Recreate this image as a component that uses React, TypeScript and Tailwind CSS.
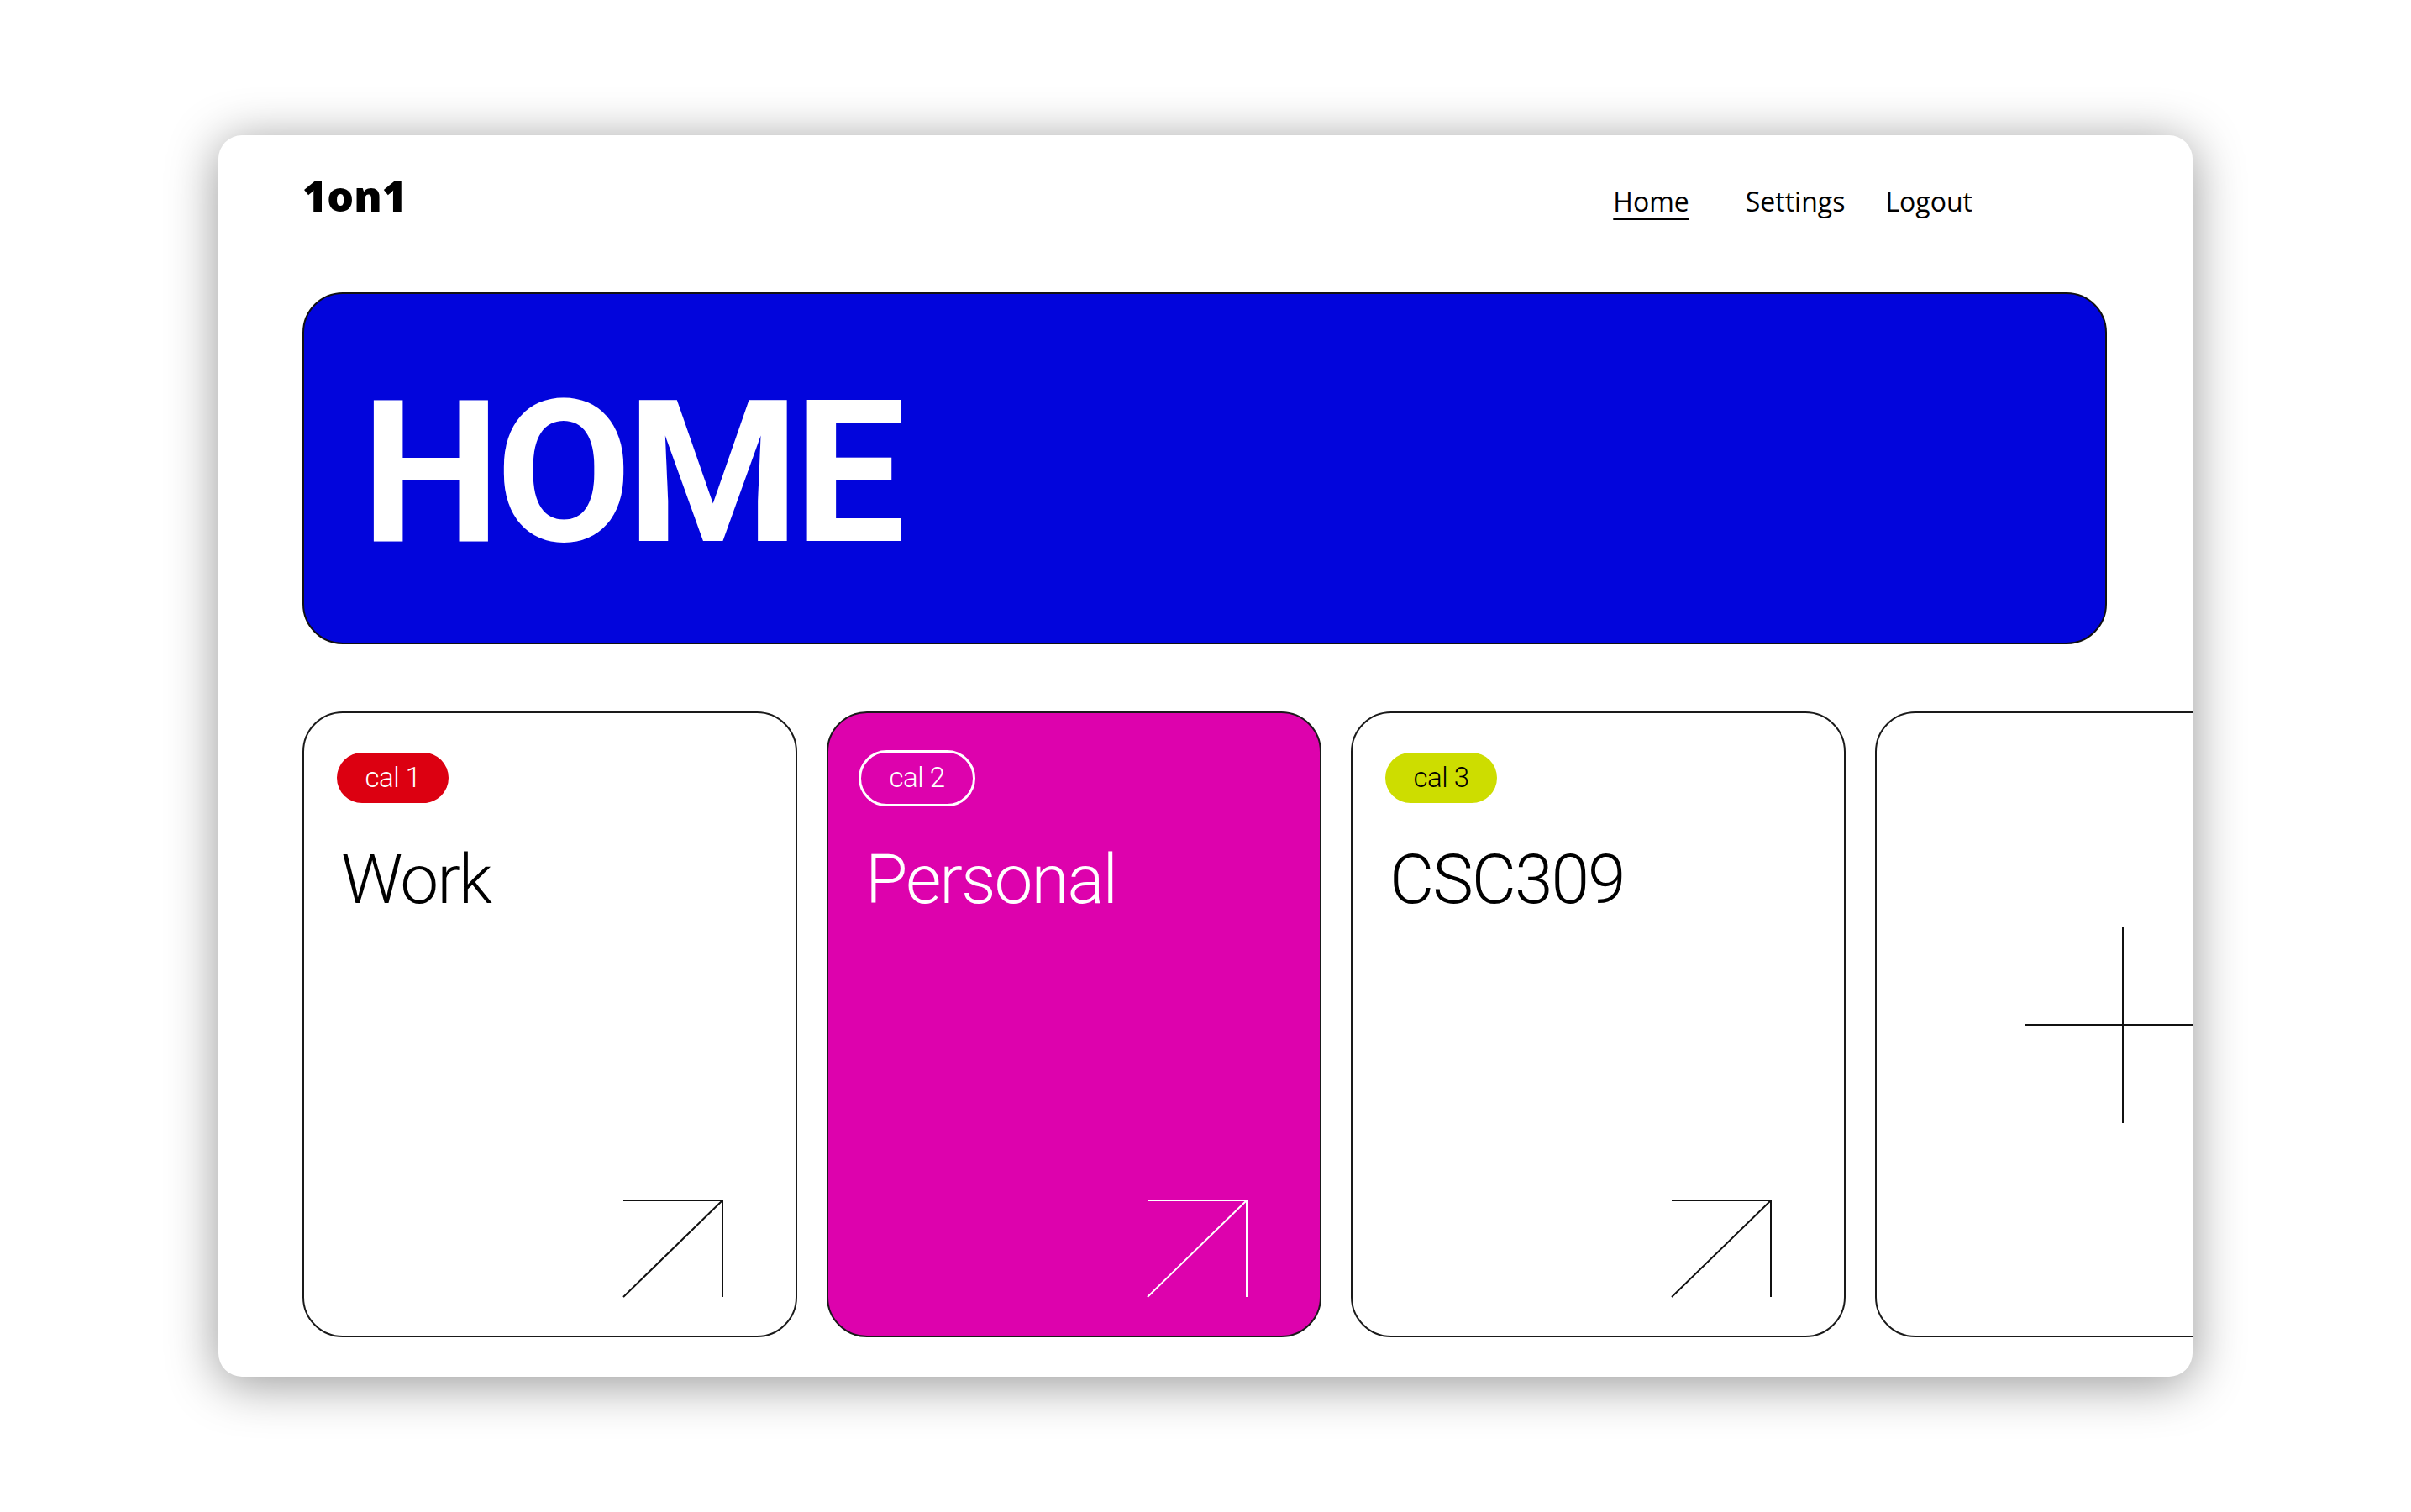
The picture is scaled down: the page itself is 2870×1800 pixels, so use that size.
import React from 'react';

type CalendarCard = {
  id: string;
  label: string;
  title: string;
  variant: 'red' | 'magenta' | 'lime';
};

const CARDS: CalendarCard[] = [
  { id: 'cal1', label: 'cal 1', title: 'Work', variant: 'red' },
  { id: 'cal2', label: 'cal 2', title: 'Personal', variant: 'magenta' },
  { id: 'cal3', label: 'cal 3', title: 'CSC309', variant: 'lime' },
];

function ArrowIcon({ light }: { light: boolean }) {
  return (
    <svg width="120" height="117" viewBox="0 0 120 117" fill="none" className="block">
      <path
        d="M1 1 H119 V116 M1 116 L119 1"
        stroke={light ? '#ffffff' : '#111111'}
        strokeWidth="2"
      />
    </svg>
  );
}

function Badge({ label, variant }: { label: string; variant: CalendarCard['variant'] }) {
  if (variant === 'magenta') {
    return (
      <div className="ml-[-3px] flex h-[67px] w-[139px] items-center justify-center rounded-full border-[3px] border-white text-[33px] font-light tracking-[-0.5px] text-white">
        {label}
      </div>
    );
  }
  const tone = variant === 'red' ? 'bg-[#dc0011] text-white' : 'bg-[#cddd00] text-black';
  return (
    <div className={`flex h-[60px] w-[133px] items-center justify-center rounded-full text-[33px] font-light tracking-[-0.5px] ${tone}`}>
      {label}
    </div>
  );
}

function Card({ card }: { card: CalendarCard }) {
  const light = card.variant === 'magenta';
  return (
    <div
      className={`flex h-[745px] w-[589px] shrink-0 flex-col rounded-[48px] border-2 border-[#1a1a1a] pl-[39px] pr-[86px] pt-[47px] pb-[45px] ${
        light ? 'bg-[#dd02ad]' : 'bg-white'
      }`}
    >
      <div className="flex h-[60px] items-center">
        <Badge label={card.label} variant={card.variant} />
      </div>
      <div
        className={`ml-[5px] mt-[50px] text-[82px] font-light leading-none tracking-[-2px] ${
          light ? 'text-white' : 'text-black'
        }`}
      >
        {card.title}
      </div>
      <div className="mt-auto self-end">
        <ArrowIcon light={light} />
      </div>
    </div>
  );
}

function AddCard() {
  return (
    <div className="flex h-[745px] w-[589px] shrink-0 items-center justify-center rounded-[48px] border-2 border-[#1a1a1a] bg-white">
      <svg width="234" height="234" viewBox="0 0 234 234" fill="none" className="block">
        <path d="M117 0 V234 M0 117 H234" stroke="#111111" strokeWidth="2" />
      </svg>
    </div>
  );
}

export default function App() {
  return (
    <div className="flex h-screen w-full items-center justify-center bg-white font-[Roboto,sans-serif]">
      <div className="flex h-[1478px] w-[2350px] flex-col overflow-hidden rounded-[28px] bg-white pl-[100px] pr-[102px] pt-[47px] shadow-[0_8px_60px_rgba(0,0,0,0.42)]">
        <header className="flex items-baseline">
          <div className="font-['Open_Sans',sans-serif] text-[50px] font-extrabold leading-none text-black">1on1</div>
          <nav className="ml-auto mr-[160px] flex items-baseline font-['Open_Sans',sans-serif] text-[32px] leading-none text-black">
            <a className="mr-[67px] underline decoration-[3px] underline-offset-[7px]">Home</a>
            <a className="mr-[48px]">Settings</a>
            <a>Logout</a>
          </nav>
        </header>

        <section className="mt-[90px] flex h-[419px] items-center rounded-[48px] border-2 border-[#111111] bg-[#0205dc] pl-[68px] pt-[12px]">
          <h1 className="text-[235px] font-bold leading-none tracking-[-6px] text-white">HOME</h1>
        </section>

        <div className="mt-[80px] flex gap-[35px]">
          {CARDS.map((c) => (
            <Card key={c.id} card={c} />
          ))}
          <AddCard />
        </div>
      </div>
    </div>
  );
}
